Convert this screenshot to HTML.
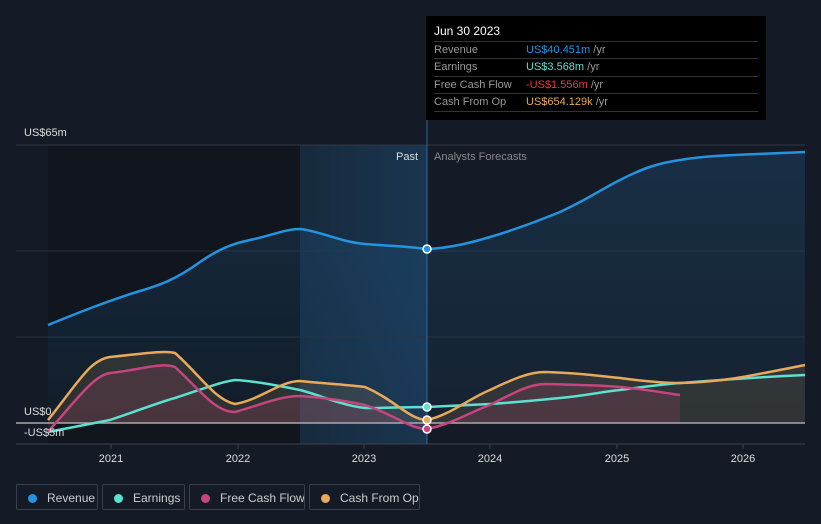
<!DOCTYPE html>
<html><head><style>
body{margin:0;background:#151b26;font-family:"Liberation Sans",sans-serif;}
.wrap{position:relative;width:821px;height:524px;overflow:hidden;background:#151b26}
.tt{position:absolute;left:426px;top:16px;width:340px;height:104px;background:#000;color:#ddd;font-size:11px}
.tt .h{position:absolute;left:8px;top:8px;color:#fff;font-size:12px}
.tt .r{position:absolute;left:8px;width:324px;border-top:1px solid #333;height:17px;line-height:17px;white-space:nowrap}
.tt .r span.l{color:#999;display:inline-block;width:92px}
.leg{position:absolute;top:484px;height:26px;border:1px solid #39404c;border-radius:2px;color:#ccc;font-size:12px;line-height:26px;box-sizing:border-box;white-space:nowrap;overflow:hidden}
.leg i{display:inline-block;width:9px;height:9px;border-radius:50%;margin:0 10px 0 11px;vertical-align:-1px}
</style></head><body><div class="wrap">
<svg width="821" height="524" style="position:absolute;left:0;top:0">
<defs>
<linearGradient id="hl" x1="0" x2="1"><stop offset="0" stop-color="#172a3d"/><stop offset="1" stop-color="#1a3550"/></linearGradient>
<linearGradient id="rv" x1="0" y1="0" x2="0" y2="1"><stop offset="0" stop-color="#1e5d8f" stop-opacity=".3"/><stop offset="1" stop-color="#1e5d8f" stop-opacity=".1"/></linearGradient>
</defs>
<rect x="48" y="145" width="252" height="299" fill="#11161e"/>
<rect x="300" y="145" width="127" height="299" fill="url(#hl)"/>
<line x1="16" y1="145" x2="805" y2="145" stroke="#2e3642"/>
<line x1="16" y1="251" x2="805" y2="251" stroke="#262e3a"/>
<line x1="16" y1="337" x2="805" y2="337" stroke="#262e3a"/>
<path d="M48,325 C80,312 110,300 140,291 C160,285 175,280 200,262 C220,248 235,243 250,240 C270,236 285,229 300,229 C320,231 340,242 365,244 C390,246 405,246 427,249 C450,248 470,243 490,237 C520,228 540,220 560,212 C590,198 600,190 620,180 C645,167 660,163 680,160 C710,155 740,155 805,152 L805,423 L48,423 Z" fill="url(#rv)"/>
<path d="M48,420 C80,380 90,360 110,357 C140,354 165,350 175,353 C200,375 215,400 235,404 C260,400 280,381 300,381 C330,384 350,385 365,387 C395,400 410,420 427,420 C450,415 470,398 490,390 C515,378 530,372 545,372 C580,373 600,376 620,378 C650,382 665,383 680,383 C720,382 740,378 805,365 L805,423 L48,423 Z" fill="#c9a25a" fill-opacity=".15"/>
<path d="M48,432 C80,395 95,375 110,373 C140,370 160,362 175,367 C200,390 215,412 235,412 C260,405 280,396 300,396 C330,398 350,402 365,405 C395,415 410,429 427,429 C450,425 470,412 490,405 C515,392 530,384 545,384 C580,385 600,385 620,387 C650,390 665,393 680,395 L680,423 L48,423 Z" fill="#c04a7c" fill-opacity=".18"/>
<line x1="16" y1="423" x2="805" y2="423" stroke="#aaa" stroke-width="1.5"/>
<line x1="16" y1="444" x2="805" y2="444" stroke="#3a424e"/>
<line x1="427" y1="120" x2="427" y2="444" stroke="#2b6a9e"/>
<g stroke="#3a424e"><line x1="111" y1="444" x2="111" y2="449"/><line x1="238" y1="444" x2="238" y2="449"/><line x1="364" y1="444" x2="364" y2="449"/><line x1="490" y1="444" x2="490" y2="449"/><line x1="617" y1="444" x2="617" y2="449"/><line x1="743" y1="444" x2="743" y2="449"/></g>
<g fill="none" stroke-width="2.5">
<path d="M48,432 C80,426 100,422 110,420 C140,410 160,402 175,398 C200,390 220,382 235,380 C255,381 280,386 300,390 C320,395 340,405 365,408 C390,408 410,407 427,407 C450,406 470,405 490,404 C520,402 540,400 560,398 C590,395 600,392 620,390 C650,386 665,384 680,383 C720,380 740,378 805,375" stroke="#5ce0cf"/>
<path d="M48,432 C80,395 95,375 110,373 C140,370 160,362 175,367 C200,390 215,412 235,412 C260,405 280,396 300,396 C330,398 350,402 365,405 C395,415 410,429 427,429 C450,425 470,412 490,405 C515,392 530,384 545,384 C580,385 600,385 620,387 C650,390 665,393 680,395" stroke="#c6457e"/>
<path d="M48,420 C80,380 90,360 110,357 C140,354 165,350 175,353 C200,375 215,400 235,404 C260,400 280,381 300,381 C330,384 350,385 365,387 C395,400 410,420 427,420 C450,415 470,398 490,390 C515,378 530,372 545,372 C580,373 600,376 620,378 C650,382 665,383 680,383 C720,382 740,378 805,365" stroke="#e8a95a"/>
<path d="M48,325 C80,312 110,300 140,291 C160,285 175,280 200,262 C220,248 235,243 250,240 C270,236 285,229 300,229 C320,231 340,242 365,244 C390,246 405,246 427,249 C450,248 470,243 490,237 C520,228 540,220 560,212 C590,198 600,190 620,180 C645,167 660,163 680,160 C710,155 740,155 805,152" stroke="#2394e0"/>
</g>
<g stroke="#fff" stroke-width="1.5"><circle cx="427" cy="249" r="4" fill="#2394e0"/><circle cx="427" cy="407" r="4" fill="#5ce0cf"/><circle cx="427" cy="420" r="4" fill="#e8a95a"/><circle cx="427" cy="429" r="4" fill="#c6457e"/></g>
<g font-family="Liberation Sans" font-size="11" fill="#ddd">
<text x="24" y="136">US$65m</text><text x="24" y="415">US$0</text><text x="24" y="436">-US$5m</text>
<text x="418" y="160" text-anchor="end" fill="#ddd">Past</text><text x="434" y="160" fill="#888">Analysts Forecasts</text>
<g text-anchor="middle"><text x="111" y="462">2021</text><text x="238" y="462">2022</text><text x="364" y="462">2023</text><text x="490" y="462">2024</text><text x="617" y="462">2025</text><text x="743" y="462">2026</text></g>
</g>
</svg>
<div class="tt"><div class="h">Jun 30 2023</div>
<div class="r" style="top:25px"><span class="l">Revenue</span><span style="color:#2394e0">US$40.451m</span> <span style="color:#999">/yr</span></div>
<div class="r" style="top:42px"><span class="l">Earnings</span><span style="color:#5ce0cf">US$3.568m</span> <span style="color:#999">/yr</span></div>
<div class="r" style="top:60px"><span class="l">Free Cash Flow</span><span style="color:#e5383b">-US$1.556m</span> <span style="color:#999">/yr</span></div>
<div class="r" style="top:77px"><span class="l">Cash From Op</span><span style="color:#e8a95a">US$654.129k</span> <span style="color:#999">/yr</span></div>
<div class="r" style="top:95px;height:0"></div>
</div>
<div class="leg" style="left:16px;width:82px"><i style="background:#2394e0"></i>Revenue</div>
<div class="leg" style="left:102px;width:83px"><i style="background:#5ce0cf"></i>Earnings</div>
<div class="leg" style="left:189px;width:116px"><i style="background:#c6457e"></i>Free Cash Flow</div>
<div class="leg" style="left:309px;width:111px"><i style="background:#e8a95a"></i>Cash From Op</div>
</div></body></html>
